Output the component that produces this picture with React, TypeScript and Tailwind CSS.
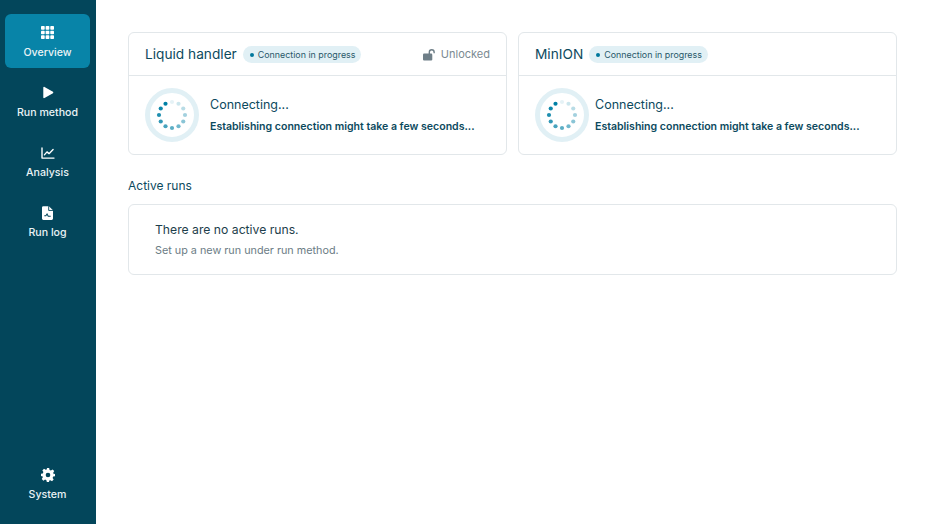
import React from "react";

const Grid = () => (
  <svg width="13" height="13" viewBox="0 0 14 14" fill="#fff">
    {[0, 5, 10].flatMap((y) => [0, 5, 10].map((x) => <rect key={`${x}-${y}`} x={x} y={y} width="4" height="4" rx="0.8" />))}
  </svg>
);
const Play = () => (
  <svg width="12" height="13" viewBox="0 0 14 14" fill="#fff"><path d="M1.500 1.200c0-.7.8-1.100 1.400-.7l9.900 5.700c.5.400.5 1.200 0 1.600l-9.900 5.700c-.6.400-1.400 0-1.400-.7z" /></svg>
);
const Chart = () => (
  <svg width="14" height="12" viewBox="0 0 15 13" fill="none" stroke="#fff" strokeWidth="1.500" strokeLinecap="round" strokeLinejoin="round">
    <path d="M1 1v11h13" /><path d="M3.600 8.500 6.400 5.300 8.600 7.200 13 2.800" />
  </svg>
);
const FileIcon = () => (
  <svg width="11" height="14" viewBox="0 0 12 15">
    <path fill="#fff" d="M1.500 0H7.500L12 4.500V13.500A1.500 1.500 0 0 1 10.500 15H1.500A1.500 1.500 0 0 1 0 13.500V1.500A1.500 1.500 0 0 1 1.500 0Z" />
    <path d="M7.300 0V4.700H12" fill="none" stroke="#03465b" strokeWidth="1" />
    <path d="M2.500 10.500H4.200L5.500 8.500 6.800 11H9.500" fill="none" stroke="#03465b" strokeWidth="1.100" />
  </svg>
);
const Gear = () => (
  <svg width="14" height="14" viewBox="0 0 24 24" fill="#fff">
    <path fillRule="evenodd" d="M10 0h4l.7 3.300 2.300 1 2.900-1.800 2.800 2.800-1.800 2.900 1 2.300L24 10v4l-3.100.7-1 2.300 1.800 2.900-2.800 2.800-2.900-1.800-2.300 1L14 24h-4l-.7-3.100-2.300-1-2.900 1.800-2.800-2.800 1.800-2.900-1-2.300L0 14v-4l3.100-.7 1-2.300-1.800-2.900 2.800-2.800 2.900 1.800 2.300-1zM12 8a4 4 0 1 0 0 8 4 4 0 0 0 0-8z" />
  </svg>
);
const Lock = () => (
  <svg width="13" height="12" viewBox="0 0 14 12" fill="#6f7f88">
    <rect x="0" y="4.500" width="10" height="7.500" rx="1.200" />
    <path d="M6.800 5V3a2.600 2.600 0 0 1 5.200 0v1" fill="none" stroke="#6f7f88" strokeWidth="1.500" />
  </svg>
);

const Spinner = () => {
  const opacities = [0.1, 0.2, 0.28, 0.36, 0.46, 0.56, 0.64, 0.72, 0.8, 0.88, 0.94, 1];
  return (
    <svg width="54" height="54" viewBox="0 0 54 54" className="shrink-0">
      <circle cx="27" cy="27" r="24.500" fill="none" stroke="#e1f0f5" strokeWidth="5" />
      {opacities.map((o, i) => {
        const a = (i * 30 * Math.PI) / 180;
        return <circle key={i} cx={27 + 13 * Math.sin(a)} cy={27 - 13 * Math.cos(a)} r="2.100" fill="#0080a5" opacity={o} />;
      })}
    </svg>
  );
};

const Nav = ({ icon, label, active }: { icon: React.ReactNode; label: string; active?: boolean }) => (
  <div className={`mx-[5px] w-[85px] h-[54px] rounded-md flex flex-col items-center pt-[11px] ${active ? "bg-[#0884a8]" : ""}`}>
    <div className="h-[15px] flex items-center justify-center">{icon}</div>
    <div className="mt-[6px] text-[10.600px] leading-[14px] font-medium text-[#eaf3f6] whitespace-nowrap">{label}</div>
  </div>
);

const Card = ({ title, unlocked, gap }: { title: string; unlocked?: boolean; gap: string }) => (
  <div className="h-[123px] bg-white border border-[#e2e7ea] rounded-md">
    <div className="h-[43px] border-b border-[#e2e7ea] flex items-center px-[16px] pt-[1px]">
      <span className="text-[13.700px] text-[#0c4a5e]">{title}</span>
      <span className="ml-[6px] h-[17px] rounded-full bg-[#e1f0f5] flex items-center pl-[7px] pr-[6px] text-[8.900px] text-[#29586a]">
        <span className="w-[4px] h-[4px] rounded-full bg-[#00789c] mr-[4px]" />
        Connection in progress
      </span>
      {unlocked && (
        <span className="ml-auto flex items-center gap-[5px] text-[11px] text-[#7b8a92]">
          <Lock />
          Unlocked
        </span>
      )}
    </div>
    <div className={`flex items-center pl-[16px] pt-[12px] ${gap}`}>
      <Spinner />
      <div>
        <div className="text-[12.500px] leading-[16px] text-[#0c4a5e]">Connecting...</div>
        <div className="mt-[7px] text-[10.550px] leading-[14px] font-semibold text-[#0c4a5e] whitespace-nowrap">Establishing connection might take a few seconds...</div>
      </div>
    </div>
  </div>
);

export default function App() {
  return (
    <div className="flex h-[524px] w-[931px] overflow-hidden bg-white font-['Inter','Liberation_Sans',sans-serif]">
      <aside className="w-[95.500px] shrink-0 bg-[#03465b] flex flex-col pt-[14px]">
        <Nav icon={<Grid />} label="Overview" active />
        <div className="mt-[6px] flex flex-col gap-[6px]">
          <Nav icon={<Play />} label="Run method" />
          <Nav icon={<Chart />} label="Analysis" />
          <Nav icon={<FileIcon />} label="Run log" />
        </div>
        <div className="mt-auto mb-[14px]">
          <Nav icon={<Gear />} label="System" />
        </div>
      </aside>
      <main className="w-[802px] pl-[32.500px] pt-[32px]">
        <div className="w-[769px] grid grid-cols-2 gap-[11px]">
          <Card title="Liquid handler" unlocked gap="gap-[11px]" />
          <Card title="MinION" gap="gap-[6px]" />
        </div>
        <div className="mt-[23px] text-[12px] leading-[15px] text-[#0c4a5e]">Active runs</div>
        <div className="mt-[11px] w-[769px] h-[71px] border border-[#e2e7ea] rounded-md pl-[26px] pt-[17px]">
          <div className="text-[12.200px] leading-[16px] text-[#1d3e4b]">There are no active runs.</div>
          <div className="mt-[6px] text-[10.800px] leading-[14px] text-[#6b7c85]">Set up a new run under run method.</div>
        </div>
      </main>
    </div>
  );
}
